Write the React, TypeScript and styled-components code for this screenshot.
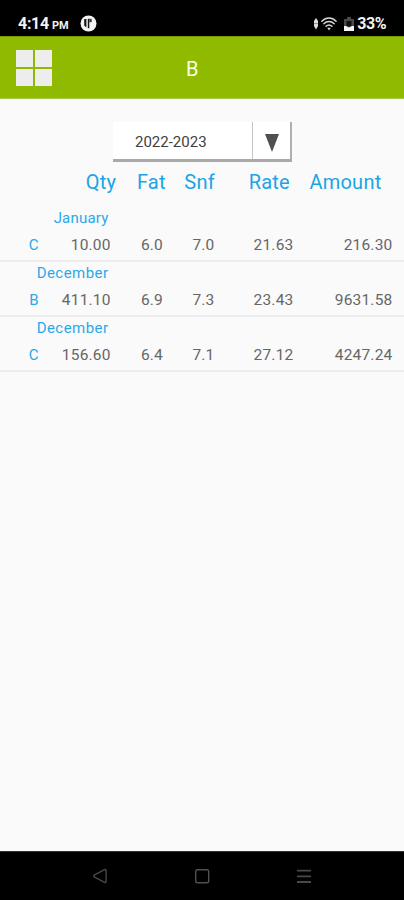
import React from "react";
import styled, { createGlobalStyle } from "styled-components";

const GlobalStyle = createGlobalStyle`
  body { margin: 0; background: #fafafa; font-family: Roboto, sans-serif; }
  * { box-sizing: border-box; }
`;

const Screen = styled.div`
  width: 404px;
  height: 900px;
  display: flex;
  flex-direction: column;
  background: #fafafa;
  overflow: hidden;
`;

const StatusBar = styled.div`
  height: 36px;
  flex: none;
  display: flex;
  justify-content: space-between;
  align-items: flex-start;
  padding: 14px 18px 0 18px;
  background: #000;
  color: #f2f2f2;
`;

const StatusGroup = styled.div`
  display: flex;
  align-items: center;
  height: 19px;
`;

const Clock = styled.span`
  font-size: 16px;
  font-weight: 700;
  line-height: 19px;
  width: 34px;
  letter-spacing: -0.3px;
`;

const Meridiem = styled.span`
  font-size: 11px;
  font-weight: 700;
  line-height: 19px;
  padding-top: 3px;
  width: 28px;
  letter-spacing: -0.2px;
`;

const Battery = styled.span`
  font-size: 16px;
  font-weight: 700;
  line-height: 19px;
  margin-left: 3px;
  letter-spacing: -0.5px;
`;

const AppBar = styled.header`
  height: 63px;
  flex: none;
  display: grid;
  grid-template-columns: 52px 1fr 71px;
  align-items: start;
  padding: 13px 0 0 16px;
  background: #8fba00;
  border-top: 1px solid #769a00;
  border-bottom: 1px solid #a9c94a;
`;

const MenuButton = styled.div`
  width: 36px;
  height: 36px;
  display: grid;
  grid-template-columns: 17px 17px;
  grid-template-rows: 17px 17px;
  gap: 2px;
`;

const Tile = styled.span`
  background: #ededed;
`;

const Title = styled.h1`
  margin: 0;
  font-size: 20px;
  font-weight: 400;
  line-height: 24px;
  color: #fbfff0;
  padding: 7px 0 0 118px;
`;

const Content = styled.main`
  flex: 1;
  padding-top: 23px;
`;

const YearSelect = styled.div`
  width: 179px;
  height: 40px;
  margin-left: 113px;
  display: flex;
  background: #fff;
  border-bottom: 3px solid #a9a9a9;
  border-right: 2px solid #b0b0b0;
`;

const YearValue = styled.div`
  width: 140px;
  padding-left: 22px;
  border-right: 1px solid #c4c4c4;
  color: #3f3f3f;
  font-size: 15px;
  line-height: 40px;
`;

const Arrow = styled.div`
  flex: 1;
  display: flex;
  align-items: center;
  justify-content: center;
  padding: 5px 0 0 1px;
`;

const columns = (widths: string) => `
  display: grid;
  grid-template-columns: ${widths};
  text-align: right;
  white-space: nowrap;
`;

const TableHead = styled.div`
  ${columns("116.3px 49.5px 49.2px 75px 91.5px")}
  height: 45px;
  padding-top: 8px;
  font-size: 20px;
  line-height: 24px;
  letter-spacing: 0.25px;
  color: #1ba4e6;
`;

const Row = styled.section`
  height: 55px;
  border-bottom: 2px solid #ececec;
`;

const Month = styled.div<{ $tracking: number }>`
  width: 108.5px;
  height: 24px;
  padding-top: 2px;
  text-align: right;
  font-size: 15px;
  line-height: 18px;
  letter-spacing: ${(p) => p.$tracking}px;
  color: #2aa8e8;
`;

const Values = styled.div`
  ${columns("38.7px 72px 52.3px 51.5px 79px 99px")}
  padding-top: 4px;
  font-size: 15.5px;
  line-height: 20px;
  letter-spacing: 0.2px;
  color: #666;
`;

const Session = styled.span`
  color: #2aa8e8;
  font-size: 15px;
`;

const NavBar = styled.nav`
  height: 49px;
  flex: none;
  display: flex;
  justify-content: space-between;
  padding: 16px 92px 0 92px;
  background: #000;
  border-top: 1px solid #333;
`;

const records = [
  { month: "January", tracking: 0.2, session: "C", values: ["10.00", "6.0", "7.0", "21.63", "216.30"] },
  { month: "December", tracking: 0.45, session: "B", values: ["411.10", "6.9", "7.3", "23.43", "9631.58"] },
  { month: "December", tracking: 0.45, session: "C", values: ["156.60", "6.4", "7.1", "27.12", "4247.24"] },
];

const AppBadgeIcon = () => (
  <svg width="17" height="17" viewBox="0 0 17 17">
    <circle cx="8.5" cy="8.5" r="8" fill="#f4f4f4" />
    <path d="M4.2 4h2.2v8.4l-2.2-2z" fill="#161616" />
    <path d="M7.8 3.8h1.5v9.4H7.8z" fill="#161616" />
    <path d="M9.3 3.8h2.4v3.4H9.3z" fill="#3a3a3a" />
  </svg>
);

const TrafficIcon = () => (
  <svg width="6" height="14" viewBox="0 0 6 14">
    <path d="M3 1 5 4v5L3 12.5 1 9V4z" fill="#dedede" />
    <path d="M1 6.6h4" stroke="#777" strokeWidth=".8" />
  </svg>
);

const WifiIcon = () => (
  <svg width="16" height="14" viewBox="0 0 16 14">
    <g fill="none" stroke="#d8d8d8" strokeWidth="1.4" strokeLinecap="round">
      <path d="M.9 4.2C5-.1 11-.1 15.1 4.2" />
      <path d="M2.8 6.8c3-3 7.4-3 10.4 0" />
      <path d="M5 9.3c1.8-1.8 4.2-1.8 6 0" />
    </g>
    <path d="M6.2 10.7h3.6L8 13.5z" fill="#d8d8d8" />
  </svg>
);

const BatteryIcon = () => (
  <svg width="10" height="14" viewBox="0 0 10 14">
    <path d="M3 0h4v2h3v12H0V2h3z" fill="#4a4a4a" />
    <path d="M2.5 4h5v5.5h-5z" fill="#111" />
    <path d="M0 9h2l3 1.6L8 9h2v5H0z" fill="#f6f6f6" />
  </svg>
);

const StatusGap = styled.span<{ $w: number }>`
  width: ${(p) => p.$w}px;
`;

export default function App() {
  return (
    <>
      <GlobalStyle />
      <Screen>
        <StatusBar>
          <StatusGroup>
            <Clock>4:14</Clock>
            <Meridiem>PM</Meridiem>
            <AppBadgeIcon />
          </StatusGroup>
          <StatusGroup>
            <TrafficIcon />
            <StatusGap $w={2} />
            <WifiIcon />
            <StatusGap $w={7} />
            <BatteryIcon />
            <Battery>33%</Battery>
          </StatusGroup>
        </StatusBar>
        <AppBar>
          <MenuButton>
            <Tile />
            <Tile />
            <Tile />
            <Tile />
          </MenuButton>
          <Title>B</Title>
        </AppBar>
        <Content>
          <YearSelect>
            <YearValue>2022-2023</YearValue>
            <Arrow>
              <svg width="14" height="18" viewBox="0 0 14 18">
                <path d="M0 0h14L7 18z" fill="#505050" />
              </svg>
            </Arrow>
          </YearSelect>
          <TableHead>
            <span>Qty</span>
            <span>Fat</span>
            <span>Snf</span>
            <span>Rate</span>
            <span>Amount</span>
          </TableHead>
          {records.map((record, i) => (
            <Row key={i}>
              <Month $tracking={record.tracking}>{record.month}</Month>
              <Values>
                <Session>{record.session}</Session>
                {record.values.map((value, j) => (
                  <span key={j}>{value}</span>
                ))}
              </Values>
            </Row>
          ))}
        </Content>
        <NavBar>
          <svg width="16" height="16" viewBox="0 0 16 16">
            <path d="M12.5 1.6 2.2 7.2q-1 .8 0 1.6l10.3 5.6q1.6.6 1.6-1V2.6q0-1.6-1.6-1z" fill="none" stroke="#484848" strokeWidth="1.4" />
          </svg>
          <svg width="16" height="16" viewBox="0 0 16 16">
            <rect x="1.7" y="1.7" width="13" height="13" rx="1.8" fill="none" stroke="#505050" strokeWidth="1.4" />
          </svg>
          <svg width="16" height="16" viewBox="0 0 16 16">
            <path d="M1 2.6h14M1 8.4h14M1 14h14" stroke="#484848" strokeWidth="1.8" />
          </svg>
        </NavBar>
      </Screen>
    </>
  );
}
